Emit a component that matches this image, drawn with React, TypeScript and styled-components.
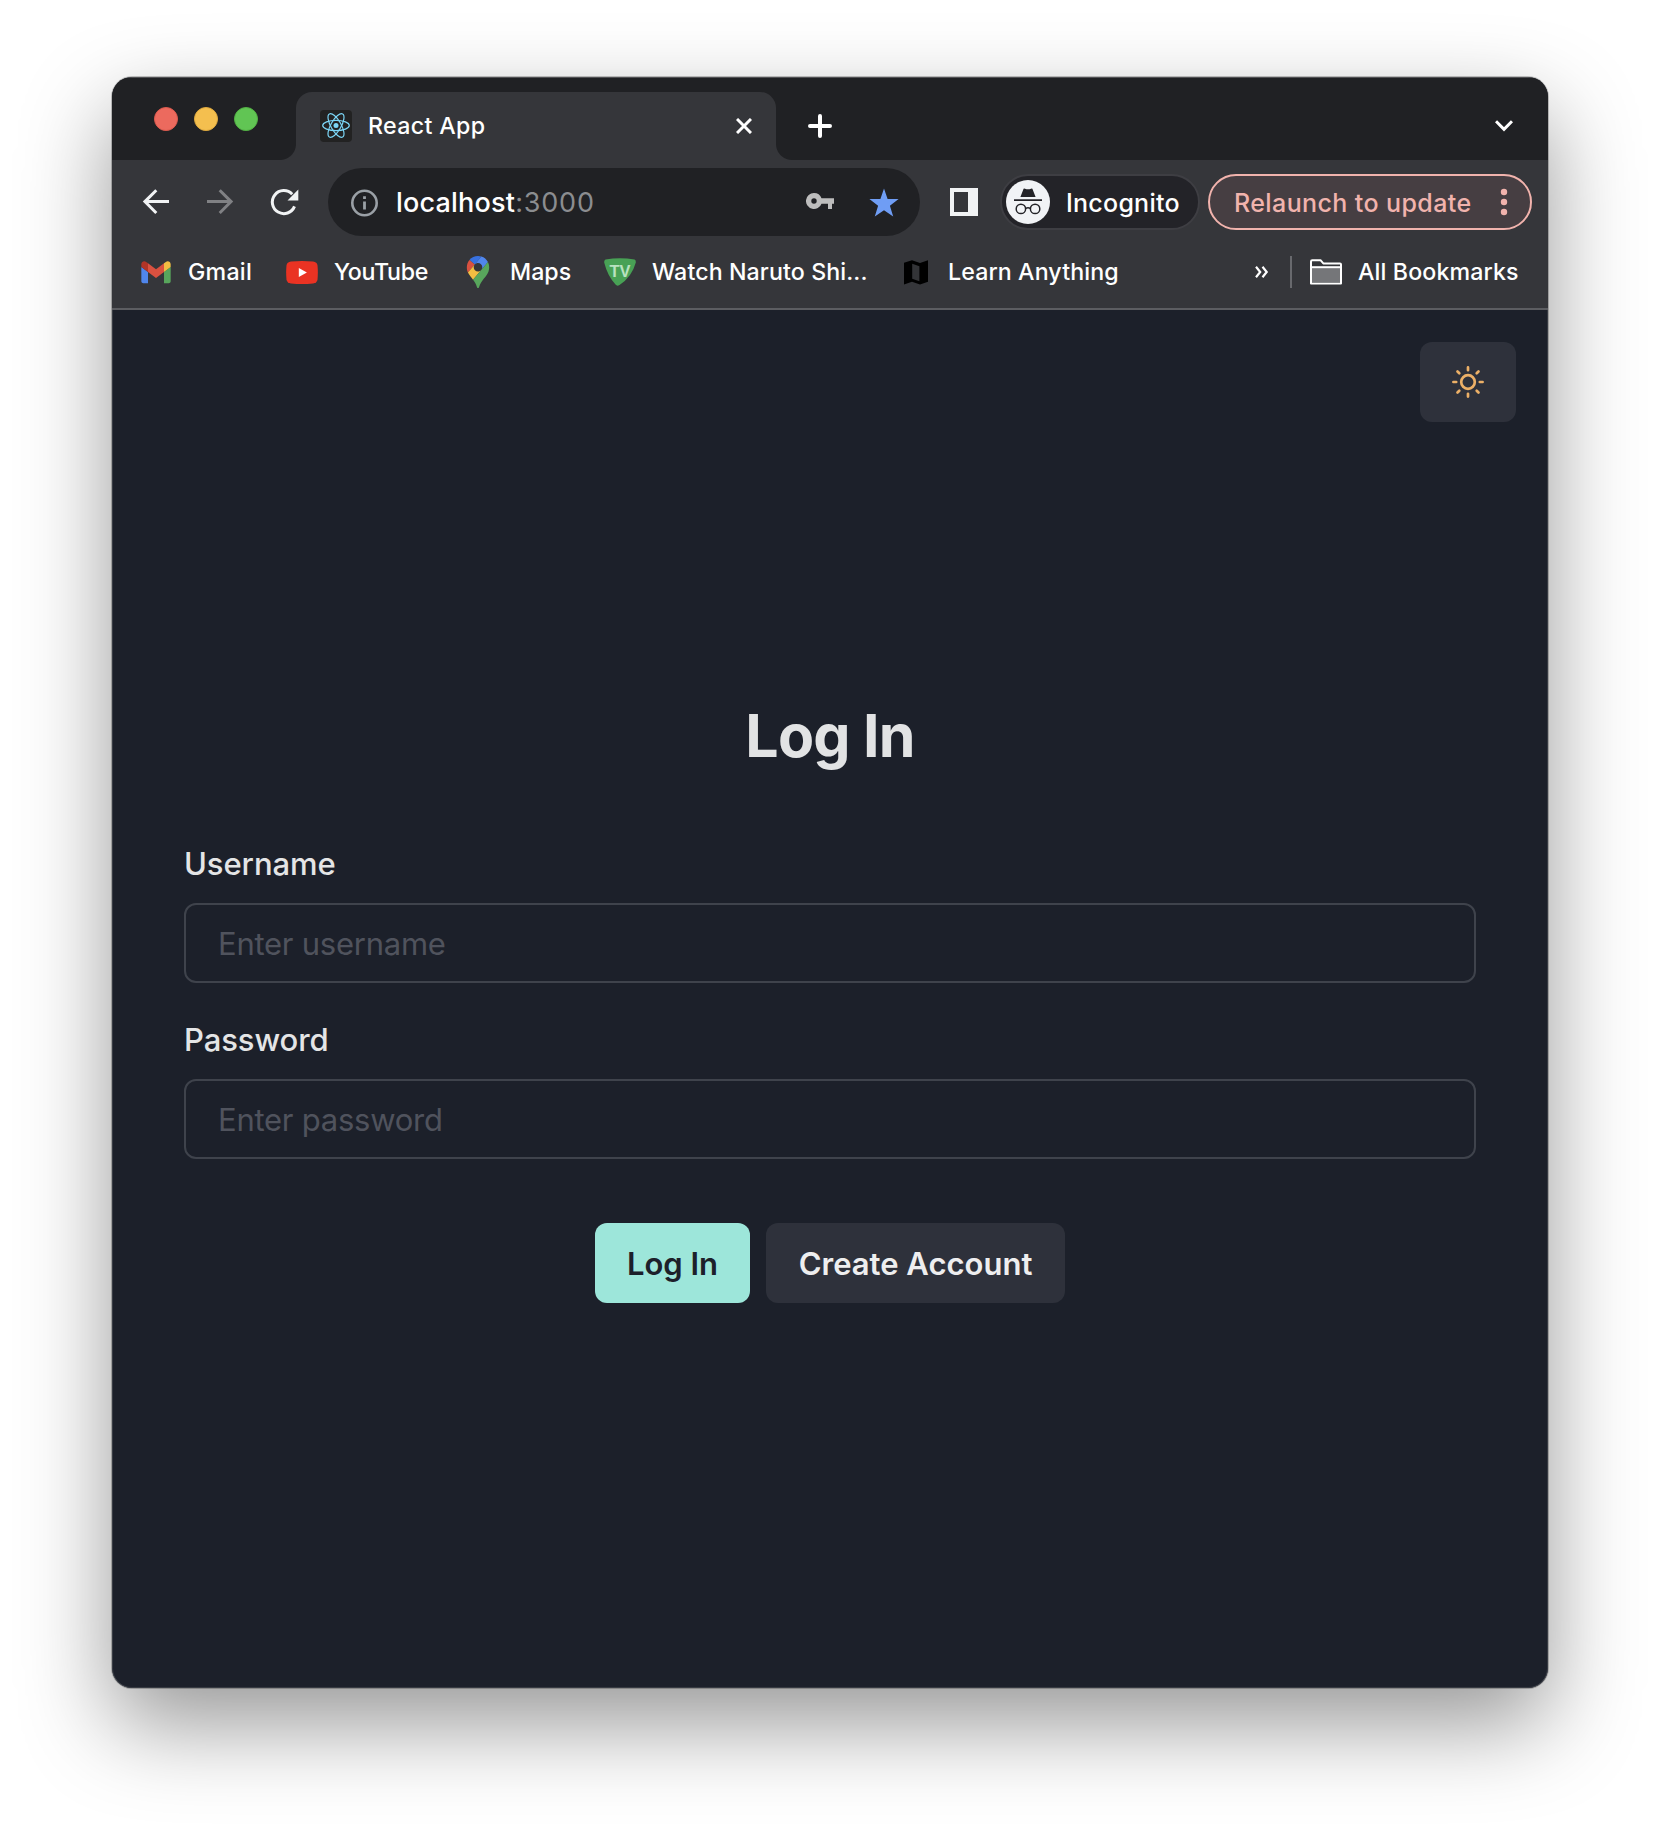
import React from "react";
import styled, { createGlobalStyle } from "styled-components";

const GlobalStyle = createGlobalStyle`
  * { box-sizing: border-box; }
  html, body { margin: 0; padding: 0; background: #fff; }
  body { font-family: Inter, "Liberation Sans", sans-serif; overflow: hidden; }
  svg { display: block; flex: none; }
`;

const Desktop = styled.div`
  width: 1660px;
  height: 1836px;
  padding: 77px 112px 0;
  background: #fff;
`;

const BrowserWindow = styled.div`
  width: 1436px;
  height: 1611px;
  border-radius: 20px;
  display: flex;
  flex-direction: column;
  overflow: hidden;
  background: #1c202a;
  box-shadow: 0 0 0 1px rgba(0, 0, 0, 0.22), 0 36px 90px rgba(0, 0, 0, 0.41);
`;

const TabStrip = styled.div`
  height: 83px;
  flex: none;
  display: flex;
  align-items: flex-end;
  background: #202124;
  box-shadow: inset 0 1px 0 rgba(255, 255, 255, 0.22);
`;

const TrafficLights = styled.div`
  display: flex;
  gap: 16px;
  width: 184px;
  padding-left: 42px;
  height: 53px;
`;

const Light = styled.span<{ $fill: string; $rim: string }>`
  width: 24px;
  height: 24px;
  border-radius: 50%;
  background: ${(p) => p.$fill};
  border: 1px solid ${(p) => p.$rim};
`;

const Tab = styled.div`
  position: relative;
  width: 480px;
  height: 68px;
  padding: 0 24px;
  display: flex;
  align-items: center;
  background: #35363a;
  border-radius: 16px 16px 0 0;
  &::before,
  &::after {
    content: "";
    position: absolute;
    bottom: 0;
    width: 16px;
    height: 16px;
  }
  &::before {
    left: -16px;
    background: radial-gradient(circle at 0 0, #202124 15.5px, #35363a 16.5px);
  }
  &::after {
    right: -16px;
    background: radial-gradient(circle at 100% 0, #202124 15.5px, #35363a 16.5px);
  }
`;

const Label = styled.span<{ $size: number; $width: number; $track?: number; $weight?: number; $color?: string }>`
  flex: none;
  width: ${(p) => p.$width}px;
  white-space: nowrap;
  padding-top: 1px;
  line-height: 1.2;
  font-size: ${(p) => p.$size}px;
  font-weight: ${(p) => p.$weight ?? 500};
  letter-spacing: ${(p) => p.$track ?? 0}px;
  color: ${(p) => p.$color ?? "#fff"};
`;

const TabTitle = styled(Label)`
  margin-left: 16px;
`;

const NewTab = styled.div`
  margin: 0 0 0 32px;
  height: 68px;
  display: flex;
  align-items: center;
`;

const TabSearch = styled.div`
  margin-left: auto;
  margin-right: 35px;
  height: 68px;
  display: flex;
  align-items: center;
`;

const Toolbar = styled.div`
  height: 84px;
  flex: none;
  display: flex;
  align-items: center;
  background: #35363a;
  padding-left: 28px;
`;

const NavButtons = styled.div`
  display: flex;
  gap: 32px;
  width: 188px;
`;

const Omnibox = styled.div`
  width: 592px;
  height: 68px;
  border-radius: 34px;
  background: #202124;
  display: flex;
  align-items: center;
  padding: 0 21px 0 22px;
`;

const OmniboxActions = styled.div`
  display: flex;
  align-items: center;
  gap: 35px;
`;

const Url = styled.span`
  margin-left: 17px;
  flex: 1;
  font-size: 27px;
  font-weight: 500;
  letter-spacing: 0.2px;
  color: #fff;
`;

const Port = styled.span`
  font-weight: 400;
  letter-spacing: 0.8px;
  color: #8b8d90;
`;

const SidePanel = styled.span`
  margin-left: 30px;
  width: 28px;
  height: 28px;
  border: 4px solid #f1f3f4;
  border-right-width: 10px;
`;

const IncognitoChip = styled.div`
  margin-left: 22px;
  width: 200px;
  height: 56px;
  border: 2px solid #3e3e43;
  border-radius: 28px;
  background: #232328;
  display: flex;
  align-items: center;
  padding-left: 4px;
  gap: 16px;
`;

const UpdateChip = styled.div`
  margin-left: 8px;
  width: 324px;
  height: 56px;
  border: 2px solid #f1b3ad;
  border-radius: 28px;
  background: #463e42;
  display: flex;
  align-items: center;
  padding-left: 24px;
`;

const Bookmarks = styled.div`
  height: 66px;
  flex: none;
  display: flex;
  align-items: flex-start;
  background: #35363a;
  border-bottom: 2px solid #5c5d61;
  padding: 12px 0 0 28px;
`;

const Bookmark = styled.div<{ $width: number; $icon: number }>`
  width: ${(p) => p.$width}px;
  height: 32px;
  display: flex;
  align-items: center;
  > svg {
    width: ${(p) => p.$icon}px;
    margin-right: 16px;
  }
`;

const Divider = styled.span`
  width: 2px;
  height: 32px;
  background: #68696d;
  margin: 0 18px 0 21px;
`;

const Page = styled.main`
  flex: 1;
  display: flex;
  flex-direction: column;
  background: #1c202a;
  box-shadow: inset 1px 0 rgba(255, 255, 255, 0.12), inset -1px 0 rgba(255, 255, 255, 0.12), inset 0 -1px rgba(255, 255, 255, 0.12);
  border-radius: 0 0 20px 20px;
  padding: 32px 72px 0;
`;

const Button = styled.button<{ $bg: string; $fg: string; $width: number }>`
  width: ${(p) => p.$width}px;
  height: 80px;
  padding: 0;
  border: 0;
  border-radius: 12px;
  background: ${(p) => p.$bg};
  color: ${(p) => p.$fg};
  display: flex;
  align-items: center;
  justify-content: center;
  font: 600 31px Inter, sans-serif;
  white-space: nowrap;
`;

const ThemeRow = styled.div`
  display: flex;
  justify-content: flex-end;
  margin-right: -40px;
`;

const Title = styled.h1`
  margin: 278px 0 0;
  height: 72px;
  line-height: 72px;
  text-align: center;
  font-size: 59px;
  font-weight: 700;
  letter-spacing: -0.8px;
  color: #e2e3e4;
`;

const Form = styled.form`
  margin-top: 67px;
  display: flex;
  flex-direction: column;
  gap: 32px;
`;

const Field = styled.label`
  display: flex;
  flex-direction: column;
  gap: 15px;
  padding-top: 1px;
  font-size: 31px;
  line-height: 48px;
  font-weight: 500;
  letter-spacing: -0.08px;
  color: #e4e5e6;
`;

const Input = styled.input`
  height: 80px;
  padding: 0 32px;
  border: 2px solid #3f434c;
  border-radius: 12px;
  background: transparent;
  font: 400 31px Inter, sans-serif;
  letter-spacing: -0.25px;
  &::placeholder {
    color: #50535d;
    opacity: 1;
  }
`;

const Actions = styled.div`
  display: flex;
  justify-content: center;
  gap: 16px;
  margin-top: 32px;
`;

const ReactLogo = () => (
  <svg width="32" height="32" viewBox="0 0 32 32">
    <rect width="32" height="32" rx="4" fill="#222" />
    <g fill="none" stroke="#7bd5f5" strokeWidth="1.2">
      <ellipse cx="16" cy="15.5" rx="13.3" ry="5.1" />
      <ellipse cx="16" cy="15.5" rx="13.3" ry="5.1" transform="rotate(60 16 15.5)" />
      <ellipse cx="16" cy="15.5" rx="13.3" ry="5.1" transform="rotate(120 16 15.5)" />
    </g>
    <circle cx="16" cy="15.5" r="2.5" fill="#7bd5f5" />
  </svg>
);

const Arrow = ({ color, flip }: { color: string; flip?: boolean }) => (
  <svg width="32" height="32" viewBox="0 0 32 32" fill="none" stroke={color} strokeWidth="3">
    <path transform={flip ? "translate(32 0) scale(-1 1)" : undefined} d="M29 15.5H5M16.3 4.2L4.9 15.6L16.3 27" />
  </svg>
);

const Reload = () => (
  <svg width="32" height="32" viewBox="0 0 32 32">
    <path d="M26.5 20.4A11.5 11.5 0 1 1 24.2 8.2" fill="none" stroke="#f1f3f4" strokeWidth="3" />
    <path d="M30.3 3.6V14.4H19.5Z" fill="#f1f3f4" />
  </svg>
);

const Info = () => (
  <svg width="29" height="29" viewBox="0 0 29 29">
    <circle cx="14.5" cy="15" r="12.2" fill="none" stroke="#9aa0a6" strokeWidth="2.6" />
    <path d="M13.1 8.3h2.8v2.8h-2.8zM13.1 13.6h2.8v8h-2.8z" fill="#9aa0a6" />
  </svg>
);

const Key = () => (
  <svg width="28" height="18" viewBox="0 0 28 18">
    <path
      fillRule="evenodd"
      fill="#bdbdbd"
      d="M8 0a8 8 0 1 0 7.5 10.7H22V16h4v-5.3h2V5.3H15.5A8 8 0 0 0 8 0Zm0 5.3a2.7 2.7 0 1 1 0 5.4a2.7 2.7 0 0 1 0-5.4Z"
    />
  </svg>
);

const Star = () => (
  <svg width="30" height="29" viewBox="0 0 30 29">
    <path fill="#6f9df4" d="M15 .4L18.6 10.9L29.6 11L20.9 17.7L24.2 28.6L15 22.2L5.8 28.6L9.1 17.7L.4 11L11.4 10.9Z" />
  </svg>
);

const Incognito = () => (
  <svg width="44" height="44" viewBox="0 0 44 44">
    <circle cx="22" cy="22" r="22" fill="#f1f3f6" />
    <path fill="#232328" d="M17.6 8.8Q18.2 8.3 19 8.7Q22 9.8 25 8.7Q25.8 8.3 26.4 8.8L29.6 17H14.4Z" />
    <path d="M8 20.1H36" stroke="#232328" strokeWidth="1.7" />
    <g fill="none" stroke="#232328" strokeWidth="1.5">
      <circle cx="14.9" cy="28.9" r="4.7" />
      <circle cx="29.1" cy="28.9" r="4.7" />
      <path d="M19.4 28.6Q22 27 24.6 28.6" />
    </g>
  </svg>
);

const Dots = () => (
  <svg width="8" height="28" viewBox="0 0 8 28" fill="#f1b3ad">
    <circle cx="4" cy="4" r="3.2" />
    <circle cx="4" cy="14" r="3.2" />
    <circle cx="4" cy="24" r="3.2" />
  </svg>
);

const Gmail = () => (
  <svg height="32" viewBox="48 26 96 96">
    <path fill="#5086ec" d="M58 108h14V74L52 59v43c0 3.32 2.69 6 6 6" />
    <path fill="#58a65c" d="M120 108h14c3.32 0 6-2.69 6-6V59l-20 15" />
    <path fill="#f2bd42" d="M120 48v26l20-15v-8c0-7.42-8.47-11.65-14.4-7.2" />
    <path fill="#d95140" d="M72 74V48l24 18 24-18v26L96 92" />
    <path fill="#b33427" d="M52 51v8l20 15V48l-5.6-4.2c-5.94-4.45-14.4-.22-14.4 7.2" />
  </svg>
);

const YouTube = () => (
  <svg height="23" viewBox="0 0 32 23">
    <path fill="#ea3323" d="M5 .6Q16-.4 27 .6Q31 1 31.5 4.5Q32.2 11.5 31.5 18.5Q31 22 27 22.4Q16 23.4 5 22.4Q1 22 .5 18.5Q-.2 11.5 .5 4.5Q1 1 5 .6Z" />
    <path fill="#fff" d="M12.8 6.9V16.1L20.9 11.5Z" />
  </svg>
);

const Maps = () => (
  <svg height="32" viewBox="0 0 92.3 132.3">
    <path fill="#3871e0" d="M60.2 2.2C55.8.8 51 0 46.1 0 32 0 19.3 6.4 10.8 16.5l21.8 18.3L60.2 2.2z" />
    <path fill="#d95140" d="M10.8 16.5C4.1 24.5 0 34.9 0 46.1c0 8.7 1.7 15.7 4.6 22l28-33.3-21.8-18.3z" />
    <path fill="#5086ec" d="M46.2 28.5c9.8 0 17.7 7.9 17.7 17.7 0 4.3-1.6 8.3-4.2 11.4 0 0 13.9-16.6 27.5-32.7-5.6-10.8-15.3-19-27-22.7L32.6 34.8c3.3-3.8 8.1-6.3 13.6-6.3" />
    <path fill="#f2bd42" d="M46.2 63.8c-9.8 0-17.7-7.9-17.7-17.7 0-4.3 1.5-8.3 4.1-11.3l-28 33.3c4.8 10.6 12.8 19.2 21 29.9l34.1-40.5c-3.3 3.9-8.1 6.3-13.5 6.3" />
    <path fill="#58a65c" d="M59.1 109.2c15.4-24.1 33.3-35 33.3-63 0-7.7-1.9-14.9-5.2-21.3L25.6 98c2.6 3.4 5.3 7.3 7.9 11.3 9.4 14.5 6.8 23.1 12.8 23.1s3.4-8.7 12.8-23.2" />
  </svg>
);

const TvShield = () => (
  <svg height="28" viewBox="0 0 32 28">
    <path fill="#48a155" d="M1.5 1.6Q16-1.2 30.5 1.6Q32 2.1 31.8 4.6Q28 19 15.5 27Q13 28.5 11.5 26.5Q3.5 18 .2 4.6Q0 2.2 1.5 1.6Z" />
    <text x="5.5" y="18.5" fontFamily="Liberation Sans" fontWeight="700" fontSize="17" fill="#b9e2c0" textLength="21" lengthAdjust="spacingAndGlyphs">TV</text>
  </svg>
);

const FoldedMap = () => (
  <svg height="25" viewBox="0 0 24 25">
    <path fill="#000" d="M0 2.8L8 .2L16 3L24 .2V21.8L16 24.6L8 21.8L0 24.6Z" />
    <path fill="#333437" d="M8.2 3.8L15.4 6.3V21.2L8.2 18.7Z" />
  </svg>
);

const Folder = () => (
  <svg height="26" viewBox="0 0 32 26">
    <path d="M1 24.5V2.5Q1 1.2 2.3 1.2H10.5L13.3 4.4H30Q31 4.4 31 5.4V24.5Z" fill="none" stroke="#fff" strokeWidth="2" strokeLinejoin="round" />
    <path d="M2 9H30V23.5H2Z" fill="#757679" />
    <path d="M1 8.2H31" stroke="#fff" strokeWidth="2" />
  </svg>
);

const Sun = () => (
  <svg width="32" height="32" viewBox="0 0 32 32" fill="none" stroke="#ecb067" strokeWidth="2.7" strokeLinecap="round">
    <circle cx="16" cy="16" r="6.8" />
    <path d="M16 1.4V4.2M16 27.8V30.6M1.4 16H4.2M27.8 16H30.6M5.5 5.5L7.3 7.3M24.7 24.7L26.5 26.5M5.5 26.5L7.3 24.7M24.7 7.3L26.5 5.5" />
  </svg>
);

export default function App() {
  return (
    <Desktop>
      <GlobalStyle />
      <BrowserWindow>
        <TabStrip>
          <TrafficLights>
            <Light $fill="#ec6a5e" $rim="#dd5a4e" />
            <Light $fill="#f4bf4f" $rim="#e0aa3e" />
            <Light $fill="#61c554" $rim="#52b144" />
          </TrafficLights>
          <Tab>
            <ReactLogo />
            <TabTitle $size={23.2} $width={368} $track={0.35}>React App</TabTitle>
            <svg width="16" height="16" viewBox="0 0 16 16" stroke="#fff" strokeWidth="3">
              <path d="M1 1L15 15M15 1L1 15" />
            </svg>
          </Tab>
          <NewTab>
            <svg width="24" height="24" viewBox="0 0 24 24" stroke="#fff" strokeWidth="4" strokeLinecap="round">
              <path d="M12 2V22M2 12H22" />
            </svg>
          </NewTab>
          <TabSearch>
            <svg width="18" height="12" viewBox="0 0 18 12" fill="none" stroke="#fff" strokeWidth="3">
              <path d="M1 1.2L9 9.4L17 1.2" />
            </svg>
          </TabSearch>
        </TabStrip>

        <Toolbar>
          <NavButtons>
            <Arrow color="#f1f3f4" />
            <Arrow color="#808184" flip />
            <Reload />
          </NavButtons>
          <Omnibox>
            <Info />
            <Url>localhost<Port>:3000</Port></Url>
            <OmniboxActions>
              <Key />
              <Star />
            </OmniboxActions>
          </Omnibox>
          <SidePanel />
          <IncognitoChip>
            <Incognito />
            <Label $size={25} $width={112} $track={0.25}>Incognito</Label>
          </IncognitoChip>
          <UpdateChip>
            <Label $size={25} $width={266} $track={0.4} $color="#f1b3ad">Relaunch to update</Label>
            <Dots />
          </UpdateChip>
        </Toolbar>

        <Bookmarks>
          <Bookmark $width={146} $icon={32}><Gmail /><Label $size={23.2} $width={66} $track={0.25}>Gmail</Label></Bookmark>
          <Bookmark $width={176} $icon={32}><YouTube /><Label $size={23.2} $width={96} $track={-0.3}>YouTube</Label></Bookmark>
          <Bookmark $width={142} $icon={32}><Maps /><Label $size={23.2} $width={66}>Maps</Label></Bookmark>
          <Bookmark $width={296} $icon={32}><TvShield /><Label $size={23.2} $width={216} $track={0.1}>Watch Naruto Shi...</Label></Bookmark>
          <Bookmark $width={354} $icon={32}><FoldedMap /><Label $size={23.2} $width={172} $track={0.1}>Learn Anything</Label></Bookmark>
          <Bookmark $width={15} $icon={15}>
            <svg height="12" viewBox="0 0 15 12" fill="none" stroke="#fff" strokeWidth="2.2">
              <path d="M2 .8L6.2 6L2 11.2M8.5 .8L12.7 6L8.5 11.2" />
            </svg>
          </Bookmark>
          <Divider />
          <Bookmark $width={210} $icon={32}><Folder /><Label $size={23.2} $width={162} $track={0.13}>All Bookmarks</Label></Bookmark>
        </Bookmarks>

        <Page>
          <ThemeRow>
            <Button $width={96} $bg="#2e313b" $fg="#ecb067" aria-label="Toggle theme"><Sun /></Button>
          </ThemeRow>
          <Title>Log In</Title>
          <Form onSubmit={(e) => e.preventDefault()}>
            <Field>Username<Input placeholder="Enter username" /></Field>
            <Field>Password<Input type="password" placeholder="Enter password" /></Field>
            <Actions>
              <Button type="submit" $width={155} $bg="#9de6da" $fg="#1c202a">Log In</Button>
              <Button type="button" $width={299} $bg="#2e313b" $fg="#eeeeef">Create Account</Button>
            </Actions>
          </Form>
        </Page>
      </BrowserWindow>
    </Desktop>
  );
}
